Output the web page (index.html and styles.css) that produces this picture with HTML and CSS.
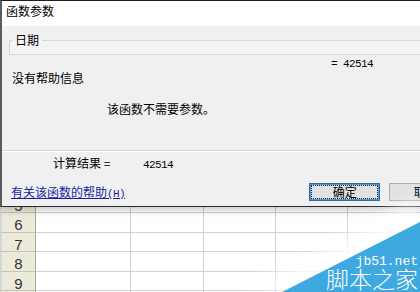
FILE: index.html
```html
<html lang="zh-CN">
<head>
    <meta charset="UTF-8">
    <title>函数参数</title>
    <link rel="stylesheet" href="styles.css">
</head>
<body>

<div class="page">
    <div class="dialog">
        <div class="titlebar">函数参数</div>
        <div class="group"><span class="group-label">日期</span></div>
        <div class="func-value">= 42514</div>
        <div class="help-none">没有帮助信息</div>
        <div class="arg-note">该函数不需要参数。</div>
        <div class="separator"></div>
        <div class="calc-row"><span class="calc-label">计算结果 =</span><span class="num">42514</span></div>
        <div class="footer">
            <div class="footer-help"><a class="help-link" href="#">有关该函数的帮助<span class="num">(H)</span></a></div>
            <button class="btn btn-ok"><span class="focus">确定</span></button>
            <button class="btn">取消</button>
        </div>
    </div>

    <div class="sheet">
        <div class="row partial"><div class="rh">5</div><div class="cell col-a"></div><div class="cell col-b"></div><div class="cell col-c"></div><div class="cell col-d"></div><div class="cell col-e"></div></div>
        <div class="row"><div class="rh">6</div><div class="cell col-a"></div><div class="cell col-b"></div><div class="cell col-c"></div><div class="cell col-d"></div><div class="cell col-e"></div></div>
        <div class="row"><div class="rh">7</div><div class="cell col-a"></div><div class="cell col-b"></div><div class="cell col-c"></div><div class="cell col-d"></div><div class="cell col-e"></div></div>
        <div class="row"><div class="rh">8</div><div class="cell col-a"></div><div class="cell col-b"></div><div class="cell col-c"></div><div class="cell col-d"></div><div class="cell col-e"></div></div>
        <div class="row"><div class="rh">9</div><div class="cell col-a"></div><div class="cell col-b"></div><div class="cell col-c"></div><div class="cell col-d"></div><div class="cell col-e"></div></div>
        <div class="row"><div class="rh">10</div><div class="cell col-a"></div><div class="cell col-b"></div><div class="cell col-c"></div><div class="cell col-d"></div><div class="cell col-e"></div></div>
    </div>

    <!-- watermark in the corner -->
    <div class="watermark">
        <div class="wm-glow"><div class="wm-glow-shape"></div></div>
        <div class="wm-tri"></div>
        <div class="wm-text">
            <div class="wm-url">jb51.net</div>
            <div class="wm-name">脚本之家</div>
        </div>
    </div>
</div>

</body>
</html>
```

FILE: styles.css
```css
body {
    margin: 0;
    font-family: "Noto Sans CJK SC", sans-serif;
    font-size: 12px;
    color: #000;
    background: #fff;
}
.page {
    position: relative;
    width: 420px;
    height: 292px;
    overflow: hidden;
}
.dialog {
    position: relative;
    z-index: 1;
    width: 460px;
    height: 205px;
    background: #f0f0f0;
    border-top: 1px solid #1e1e1e;
    border-left: 2px solid #5b5b5b;
    border-bottom: 1px solid #2a2a2a;
    box-shadow: 0 3px 8px rgba(0, 0, 0, 0.22);
}
.titlebar {
    height: 25px;
    background: #fff;
    padding-left: 4px;
    line-height: 20px;
}
.group {
    margin: 14px 0 0 7px;
    height: 13px;
    border: 1px solid #d8d8d8;
    background: #f4f4f4;
}
.group-label {
    display: block;
    width: max-content;
    margin: -8px 0 0 2px;
    padding: 0 3px;
    line-height: 14px;
    background: linear-gradient(#f0f0f0 50%, #f4f4f4 50%);
}
.func-value {
    margin-top: 3px;
    padding-left: 329px;
    font-family: "Liberation Mono", monospace;
    font-size: 11px;
    letter-spacing: -0.6px;
    line-height: 13px;
}
.help-none {
    padding-left: 10px;
    line-height: 14px;
}
.arg-note {
    margin-top: 17px;
    padding-left: 105px;
    line-height: 14px;
}
.separator {
    margin-top: 34px;
    border-top: 1px solid #d6d6d6;
    border-bottom: 1px solid #fff;
}
.calc-row {
    margin-top: 4px;
    padding-left: 51px;
    line-height: 14px;
}
.calc-label {
    display: inline-block;
    width: 90px;
}
.num {
    font-family: "Liberation Mono", monospace;
    font-size: 11px;
    letter-spacing: -0.6px;
}
.footer {
    display: flex;
    margin-top: 11px;
}
.footer-help {
    width: 309px;
    box-sizing: border-box;
    padding: 2px 0 0 9px;
    line-height: 14px;
}
.help-link {
    color: #1c1ca8;
    text-decoration: underline;
}
.btn {
    width: 73px;
    height: 18px;
    margin: 0;
    padding: 0;
    font: 12px "Noto Sans CJK SC", sans-serif;
    line-height: 14px;
    color: #000;
    background: #e1e1e1;
    border: 1px solid #adadad;
}
.btn-ok {
    width: 72px;
    margin-right: 9px;
    border-color: #2d6da3;
    box-shadow: inset 0 0 0 1px #4a98d8;
}
.focus {
    display: block;
    margin: 1px;
    border: 1px dotted #222;
    line-height: 12px;
}

.sheet {
    width: 460px;
    height: 85px;
    overflow: hidden;
    font-family: "Liberation Sans", Arial, sans-serif;
}
.row {
    display: flex;
    height: 19.5px;
}
.row.partial {
    margin-top: -13.5px;
}
.rh {
    width: 36px;
    box-sizing: border-box;
    background: #ebeadb;
    border-left: 2px solid #d6d6d6;
    border-right: 1px solid #a6a6a6;
    border-bottom: 1px solid #c4c3b4;
    text-align: center;
    font-size: 15px;
    line-height: 23px;
    color: #333;
    overflow: hidden;
}
.cell {
    box-sizing: border-box;
    border-right: 1px solid #d0d0d0;
    border-bottom: 1px solid #d0d0d0;
}
.col-a { width: 95px; }
.col-b { width: 73px; }
.col-c { width: 72px; }
.col-d { width: 72px; }
.col-e { flex: 1; }

.watermark {
    position: absolute;
    right: 0;
    bottom: 0;
    z-index: 2;
    width: 200px;
    height: 92px;
    pointer-events: none;
}
.wm-glow {
    position: absolute;
    inset: 0;
    filter: blur(10px);
}
.wm-glow-shape {
    position: absolute;
    inset: 0;
    background: rgba(255, 255, 255, 0.9);
    clip-path: polygon(200px 0, 200px 92px, 20px 92px);
}
.wm-tri {
    position: absolute;
    inset: 0;
    background: #3ea8e0;
    clip-path: polygon(200px 22px, 200px 92px, 62px 92px);
}
.wm-text {
    position: absolute;
    right: 2px;
    bottom: 2px;
    text-align: right;
    color: #fff;
}
.wm-url {
    font-family: "Liberation Mono", monospace;
    font-size: 13px;
    line-height: 13px;
}
.wm-name {
    margin-top: -1px;
    font-size: 23px;
    line-height: 23px;
    font-weight: 300;
}
```
